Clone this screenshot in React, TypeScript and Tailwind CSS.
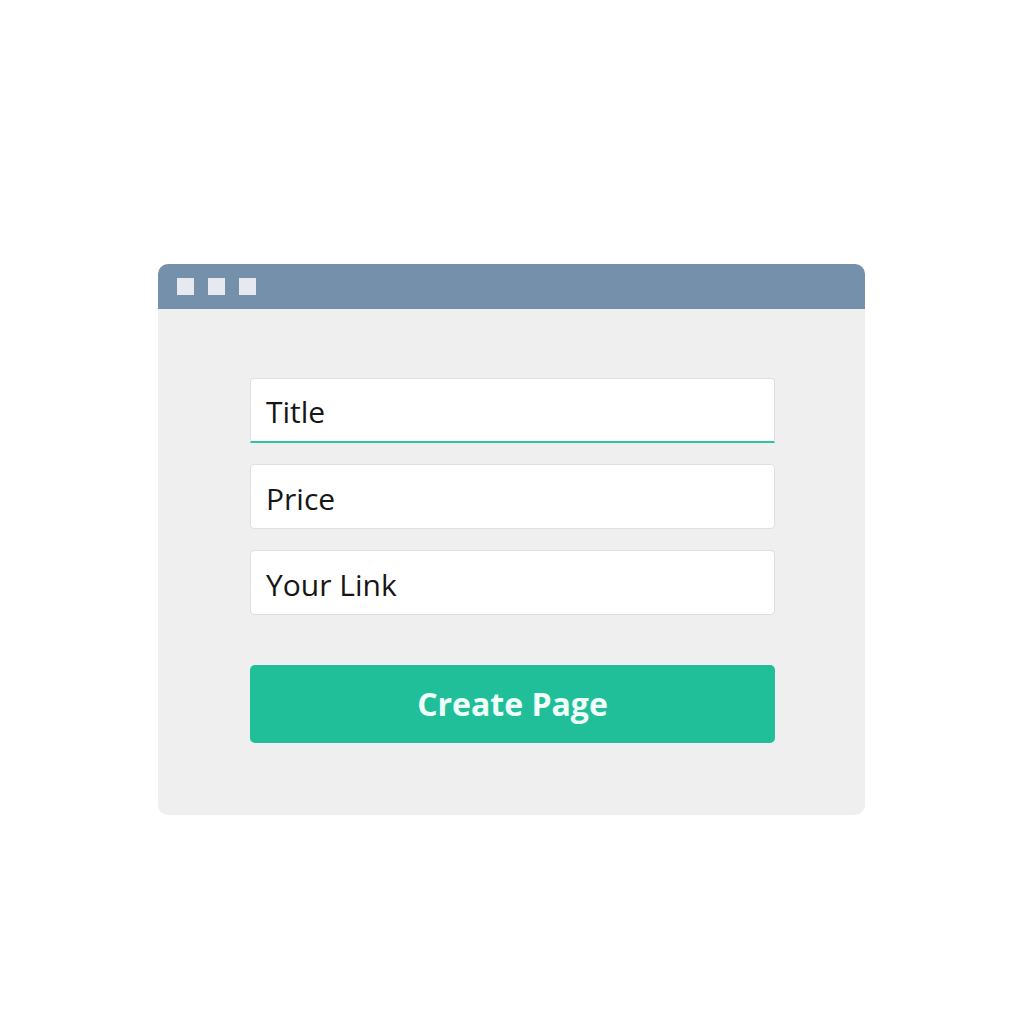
import React from "react";

export default function App() {
  return (
    <div className="w-[1024px] h-[1024px] bg-white flex justify-center pt-[264px] pr-[1px]" style={{ fontFamily: '"Open Sans", "Noto Sans", sans-serif' }}>
      <div className="w-[707px] h-[551px] bg-[#efefef] rounded-[10px] overflow-hidden flex flex-col">
        <div className="h-[45px] bg-[#7590ab] flex items-center pl-[19px] gap-[14px] shrink-0">
          <div className="w-[17px] h-[17px] bg-[#e6eaf0]" />
          <div className="w-[17px] h-[17px] bg-[#e6eaf0]" />
          <div className="w-[17px] h-[17px] bg-[#e6eaf0]" />
        </div>
        <div className="pl-[92px] pr-[90px] pt-[69px] flex flex-col">
          <div className="h-[65px] bg-white rounded-t-[4px] border border-[#dcdfe3] border-b-2 border-b-[#2cc3a0] flex items-center pl-[15px] pt-[3px] text-[30px] text-[#161616]">
            Title
          </div>
          <div className="mt-[21px] h-[65px] bg-white rounded-[4px] border border-[#dcdfe3] flex items-center pl-[15px] pt-[3px] text-[30px] text-[#161616]">
            Price
          </div>
          <div className="mt-[21px] h-[65px] bg-white rounded-[4px] border border-[#dcdfe3] flex items-center pl-[15px] pt-[3px] text-[30px] text-[#161616]">
            Your Link
          </div>
          <div className="mt-[50px] h-[78px] bg-[#20bf9a] rounded-[5px] flex items-center justify-center text-[32px] font-bold text-[#f0fffa]">
            Create Page
          </div>
        </div>
      </div>
    </div>
  );
}
